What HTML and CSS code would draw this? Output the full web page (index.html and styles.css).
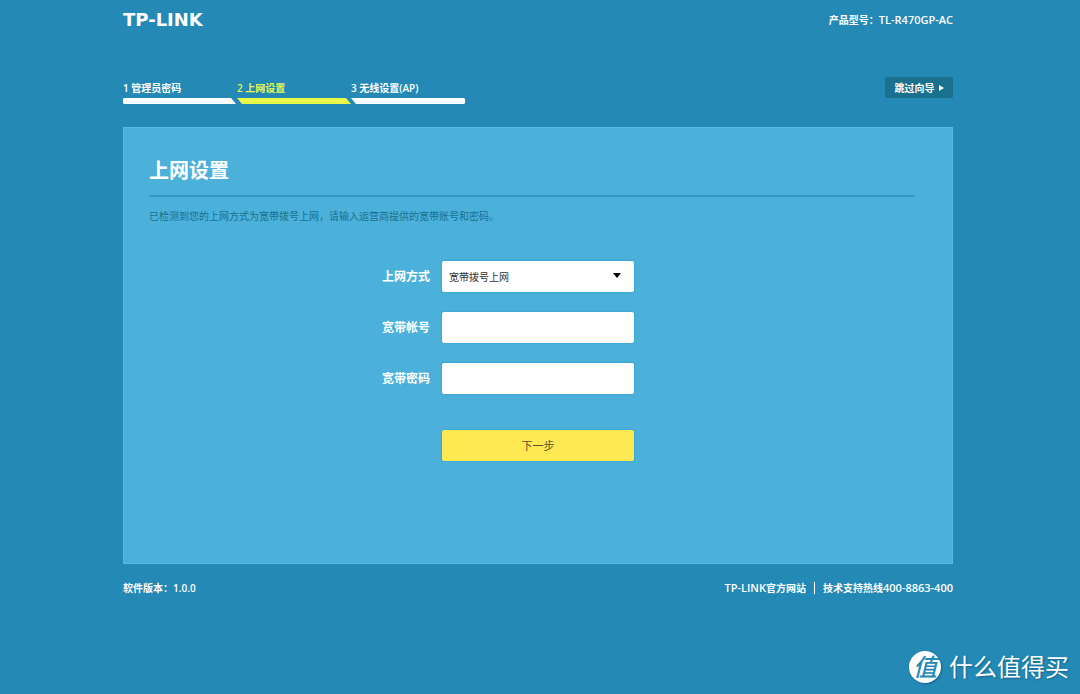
FILE: index.html
```html
<!DOCTYPE html>
<html lang="zh-CN">
<head>
<meta charset="utf-8">
<meta name="viewport" content="width=device-width, initial-scale=1">
<title>上网设置</title>
<link rel="stylesheet" href="styles.css">
</head>
<body>
<div class="page">
  <header class="header">
    <div class="logo">TP-LINK</div>
    <div class="model">产品型号：<span class="latin">TL-R470GP-AC</span></div>
  </header>
  <nav class="wizard">
    <ol class="steps">
      <li class="step">1 管理员密码<svg class="bar" viewBox="0 0 115 6" preserveAspectRatio="none"><path d="M1 0H109L114 6H1L0 5V1Z"/></svg></li>
      <li class="step active">2 上网设置<svg class="bar" viewBox="0 0 115 6" preserveAspectRatio="none"><path d="M0 0H110L115 6H5Z"/></svg></li>
      <li class="step">3 无线设置(AP)<svg class="bar" viewBox="0 0 115 6" preserveAspectRatio="none"><path d="M0 0H114L115 1V5L114 6H5Z"/></svg></li>
    </ol>
    <button class="skip" type="button">跳过向导 <svg class="skip-arrow" viewBox="0 0 5 6"><path d="M0 0L5 3L0 6Z"/></svg></button>
  </nav>
  <main class="card">
    <h1 class="title">上网设置</h1>
    <p class="hint">已检测到您的上网方式为宽带拨号上网，请输入运营商提供的宽带账号和密码。</p>
    <form class="form">
      <label class="label" for="mode">上网方式</label>
      <div class="select-box">
        <select class="field" id="mode"><option>宽带拨号上网</option></select>
        <svg class="caret" viewBox="0 0 8 5"><path d="M0 0H8L4 5Z"/></svg>
      </div>
      <label class="label" for="account">宽带帐号</label>
      <input class="field" id="account" type="text">
      <label class="label" for="password">宽带密码</label>
      <input class="field" id="password" type="password">
      <button class="next" type="submit">下一步</button>
    </form>
  </main>
  <footer class="footer">
    <div>软件版本：1.0.0</div>
    <div class="links">
      <a class="link" href="#"><span class="latin">TP-LINK</span>官方网站</a>
      <span class="divider"></span>
      <span>技术支持热线<span class="latin">400-8863-400</span></span>
    </div>
  </footer>
</div>
<div class="watermark"><span class="badge">值</span><span>什么值得买</span></div>
</body>
</html>
```
FILE: styles.css
```css
* {
  box-sizing: border-box;
}

body {
  margin: 0;
  min-height: 100vh;
  background: #2489b4;
  color: #fff;
  font: 600 10px/16px "Open Sans", "Noto Sans CJK SC", sans-serif;
}

button,
input,
select {
  font: inherit;
}

.page {
  padding: 8px 127px 0 123px;
}

.header {
  display: flex;
  justify-content: space-between;
  align-items: center;
  height: 24px;
}

.logo {
  font: bold 18px/24px "DejaVu Sans", sans-serif;
}

.latin {
  font-size: 11px;
}

.wizard {
  display: flex;
  justify-content: space-between;
  align-items: flex-start;
  margin-top: 45px;
}

.steps {
  display: flex;
  margin: 3px 0 0;
  padding: 0;
  list-style: none;
}

.step {
  width: 114px;
}

.bar {
  display: block;
  width: 100%;
  height: 6px;
  margin-top: 2px;
  fill: #fff;
}

.active {
  color: #e6fb4d;
}

.active .bar {
  fill: #eafa4b;
}

.skip {
  display: flex;
  align-items: center;
  justify-content: center;
  gap: 4px;
  width: 68px;
  height: 21px;
  padding: 0;
  border: 0;
  border-radius: 2px;
  background: #19708f;
  color: #fff;
  font-weight: 700;
}

.skip-arrow {
  width: 5px;
  height: 6px;
  fill: #fff;
}

.card {
  min-height: 437px;
  margin-top: 23px;
  padding: 28px 37px 24px 25px;
  border: 1px solid #59b9e2;
  background: #4bb0da;
}

.title {
  margin: 0;
  padding-bottom: 9px;
  border-bottom: 2px solid #3598c4;
  font-size: 20px;
  font-weight: 700;
  line-height: 30px;
}

.hint {
  margin: 11px 0 0;
  color: #19708f;
  font-weight: 400;
}

.form {
  display: grid;
  grid-template-columns: 48px 192px;
  align-items: center;
  gap: 20px 12px;
  margin: 37px 0 0 233px;
}

.label {
  font-size: 12px;
  font-weight: 700;
}

.select-box {
  position: relative;
}

.field {
  display: block;
  width: 100%;
  height: 31px;
  padding: 0 7px;
  border: 0;
  border-radius: 2px;
  background: #fff;
  box-shadow: 0 0 2px #2398d0;
  color: #333;
  font-weight: 400;
  appearance: none;
}

.caret {
  position: absolute;
  top: 12px;
  right: 13px;
  width: 8px;
  height: 5px;
  pointer-events: none;
}

.next {
  grid-column: 2;
  height: 31px;
  margin-top: 16px;
  border: 0;
  border-radius: 2px;
  background: #ffe952;
  box-shadow: 0 0 2px #2095e0;
  color: #555128;
  font-size: 11px;
  font-weight: 400;
}

.footer {
  display: flex;
  justify-content: space-between;
  margin-top: 16px;
}

.links {
  display: flex;
  align-items: center;
  gap: 8px;
}

.link {
  color: inherit;
  text-decoration: none;
}

.divider {
  width: 1px;
  height: 12px;
  background: #fff;
}

.watermark {
  position: absolute;
  right: 11px;
  bottom: 11px;
  display: flex;
  gap: 8px;
  font: 400 24px/30px "Noto Sans CJK SC", sans-serif;
  text-shadow: 1px 1px 2px #14658c;
}

.badge {
  width: 32px;
  height: 32px;
  border-radius: 50%;
  background: #fff;
  box-shadow: 1px 1px 2px #14658c;
  color: #2489b4;
  font-size: 24px;
  font-style: italic;
  font-weight: 500;
  text-align: center;
  text-shadow: none;
}
```
